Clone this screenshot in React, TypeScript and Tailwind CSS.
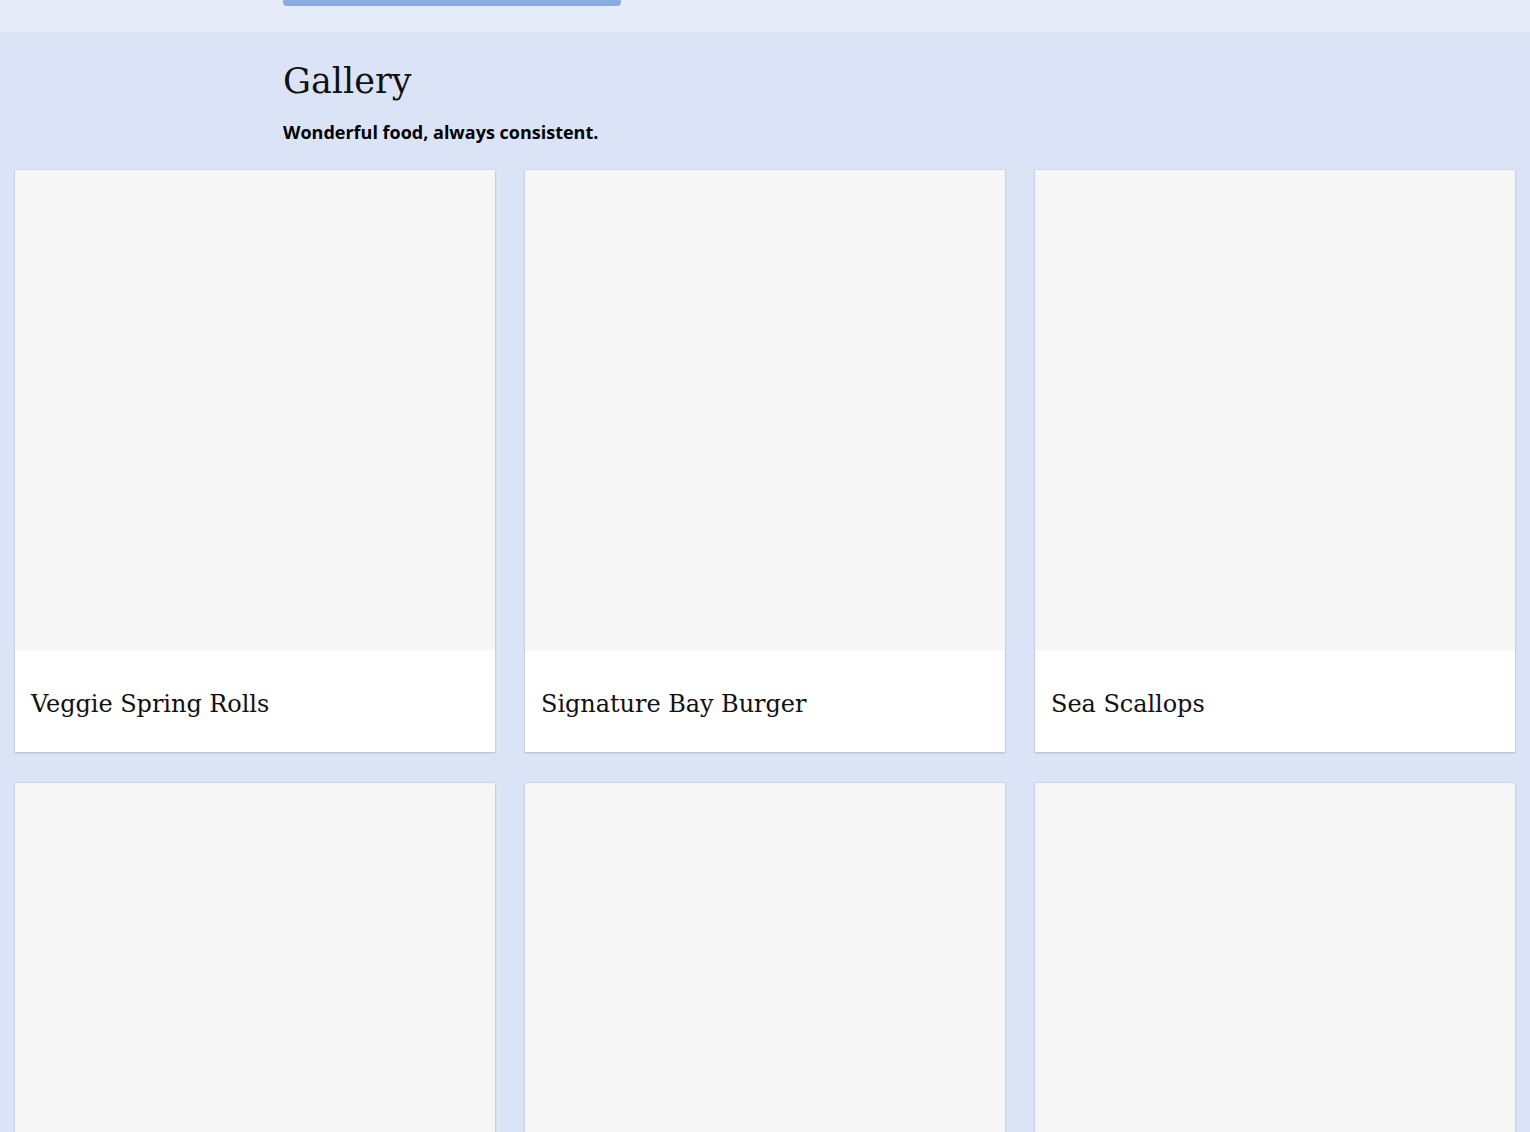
const dishes = [
  "Veggie Spring Rolls",
  "Signature Bay Burger",
  "Sea Scallops",
  "",
  "",
  "",
];

// A single gallery tile: image placeholder with the dish name below
function DishCard({ name }: { name: string }) {
  return (
    <div className="bg-white shadow-[0_0_0_1px_rgba(180,195,225,0.3),0_1px_2px_rgba(0,0,0,0.18)] flex flex-col">
      <div className="h-[480px] bg-[#f6f6f6]" />
      <div className="h-[102px] px-4 pt-[6px] flex items-center">
        <h3 className="text-[24px] text-[#111] font-['DejaVu_Serif',serif] tracking-[-0.05px]">
          {name}
        </h3>
      </div>
    </div>
  );
}

export default function App() {
  return (
    <div className="min-h-screen bg-[#dbe4f7] font-['Open_Sans',sans-serif]">
      {/* Top bar */}
      <div className="h-8 bg-[#e5ebf9]">
        <div className="max-w-[964px] mx-auto">
          <div className="w-[338px] h-[6px] bg-[#8aabe3] rounded-b" />
        </div>
      </div>

      {/* Heading */}
      <div className="max-w-[964px] mx-auto pt-[27px] pb-[26px]">
        <h1 className="text-[35px] leading-[44px] text-[#111] font-['DejaVu_Serif',serif]">
          Gallery
        </h1>
        <p className="mt-[17px] text-[18px] leading-[24px] font-bold text-black">
          Wonderful food, always consistent.
        </p>
      </div>

      {/* Grid */}
      <div className="px-[15px] grid grid-cols-3 gap-x-[30px] gap-y-[31px]">
        {dishes.map((d, i) => (
          <DishCard key={i} name={d} />
        ))}
      </div>
    </div>
  );
}
